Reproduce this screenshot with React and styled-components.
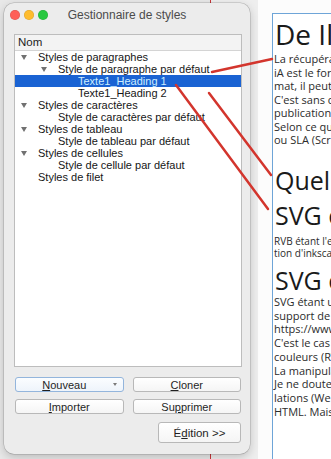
import React from 'react'
import styled, { createGlobalStyle } from 'styled-components'

const GlobalStyle = createGlobalStyle`
  html, body {
    margin: 0;
    padding: 0;
  }
  body {
    width: 331px;
    height: 459px;
    overflow: hidden;
    font-family: "Liberation Sans", Arial, sans-serif;
  }
`

const Stage = styled.div`
  position: relative;
  display: flex;
  width: 331px;
  height: 459px;
  overflow: hidden;
  background: #e8e8e8;
`

const Canvas = styled.div`
  width: 210px;
  flex: none;
  border-right: 1px solid #c9373a;
`

const Gutter = styled.div`
  width: 47px;
  flex: none;
  background: #eeeeee;
`

const Page = styled.div`
  flex: 1;
  min-width: 0;
  background: #fcfcfc;
  padding: 13px 0 0 14px;
`

const Frame = styled.div`
  height: 100%;
  border-top: 1px solid #6ea5d8;
  border-left: 1px solid #6ea5d8;
  background: #fff;
  padding-left: 1px;
  overflow: hidden;
  font-family: "Open Sans", "Noto Sans", sans-serif;
  color: #2b2b2b;
`

const Heading = styled.div`
  font-size: ${p => p.$size}px;
  line-height: ${p => p.$size}px;
  margin-top: ${p => p.$gap}px;
  padding-left: 1px;
  white-space: nowrap;
  color: #1a1a1a;
`

const Para = styled.div`
  font-size: ${p => p.$size || 11}px;
  line-height: ${p => p.$lh || 13.5}px;
  margin-top: ${p => p.$gap}px;
`

const Line = styled.div`
  white-space: nowrap;
`

/* dialog window */

const Dialog = styled.div`
  position: absolute;
  left: 4px;
  top: 3px;
  width: 246px;
  height: 451px;
  box-sizing: border-box;
  border-radius: 10px;
  background: #ececec;
  box-shadow: 0 0 0 0.5px rgba(0, 0, 0, 0.22), 0 3px 10px rgba(0, 0, 0, 0.2);
  display: flex;
  flex-direction: column;
`

const TitleBar = styled.div`
  height: 24px;
  display: grid;
  grid-template-columns: 1fr auto 1fr;
  align-items: center;
  padding: 0 6px;
`

const Lights = styled.div`
  display: flex;
  gap: 4px;
`

const Light = styled.span`
  width: 10px;
  height: 10px;
  border-radius: 50%;
  background: ${p => p.$color};
  box-shadow: inset 0 0 0 0.5px rgba(0, 0, 0, 0.15);
`

const Title = styled.div`
  font-size: 12px;
  color: #4b4b4b;
  white-space: nowrap;
`

const Body = styled.div`
  flex: 1;
  display: flex;
  flex-direction: column;
  padding: 7px 8px 11px 10px;
`

const Tree = styled.div`
  height: 333px;
  box-sizing: border-box;
  border: 1px solid #bdbdbd;
  background: #fff;
`

const TreeHeader = styled.div`
  height: 16px;
  box-sizing: border-box;
  border-bottom: 1px solid #d4d4d4;
  background: #f3f3f3;
  padding-left: 3px;
  font-size: 11.5px;
  line-height: 15px;
  color: #1d1d1d;
`

const Row = styled.div`
  height: 12px;
  display: flex;
  align-items: center;
  padding-left: ${p => 6 + p.$level * 20}px;
  background: ${p => (p.$selected ? '#1a63d3' : 'transparent')};
  color: ${p => (p.$selected ? '#cdeeff' : '#161616')};
  font-size: 11px;
  line-height: 12px;
  white-space: nowrap;
`

const Twisty = styled.span`
  width: 17px;
  flex: none;
  display: flex;
  align-items: center;
`

const Triangle = styled.span`
  width: 0;
  height: 0;
  border-left: 3.5px solid transparent;
  border-right: 3.5px solid transparent;
  border-top: 5px solid #717171;
`

const ButtonGrid = styled.div`
  display: grid;
  grid-template-columns: 1fr 1fr;
  gap: 7px 9px;
  margin-top: 10px;
  padding: 0 1px;
`

const Button = styled.div`
  height: ${p => p.$h || 15}px;
  box-sizing: border-box;
  border: 1px solid ${p => (p.$focus ? '#93b5dc' : '#b8b8b8')};
  border-radius: 3px;
  background: ${p =>
    p.$focus ? 'linear-gradient(#fbfdff, #eef4fb)' : 'linear-gradient(#ffffff, #f5f5f5)'};
  display: flex;
  align-items: center;
  justify-content: center;
  font-size: 11px;
  color: #1f1f1f;
  white-space: nowrap;
`

const Label = styled.span`
  flex: 1;
  text-align: center;
`

const Key = styled.span`
  text-decoration: underline;
  text-underline-offset: 1px;
`

const DropArrow = styled.span`
  width: 0;
  height: 0;
  margin-right: 6px;
  border-left: 2.5px solid transparent;
  border-right: 2.5px solid transparent;
  border-top: 3px solid #7a7a7a;
`

const EditRow = styled.div`
  display: flex;
  justify-content: flex-end;
  margin-top: 8px;
  padding-right: 1px;
`

const EditButton = styled(Button)`
  width: 83px;
  font-size: 11.5px;
`

const Annotations = styled.svg`
  position: absolute;
  left: 0;
  top: 0;
  pointer-events: none;
`

const rows = [
  { level: 0, open: true, text: 'Styles de paragraphes' },
  { level: 1, open: true, text: 'Style de paragraphe par défaut' },
  { level: 2, text: 'Texte1_Heading 1', selected: true },
  { level: 2, text: 'Texte1_Heading 2' },
  { level: 0, open: true, text: 'Styles de caractères' },
  { level: 1, text: 'Style de caractères par défaut' },
  { level: 0, open: true, text: 'Styles de tableau' },
  { level: 1, text: 'Style de tableau par défaut' },
  { level: 0, open: true, text: 'Styles de cellules' },
  { level: 1, text: 'Style de cellule par défaut' },
  { level: 0, text: 'Styles de filet' },
]

const intro = [
  'La récupération des fichiers',
  'iA est le format natif de',
  'mat, il peut être importé',
  "C'est sans compter sur la",
  'publication assistée par',
  'Selon ce que vous voulez',
  'ou SLA (Scribus) directement',
]

const rvb = [
  "RVB étant l'espace colorimétrique",
  "tion d'inkscape par défaut",
]

const svgText = [
  'SVG étant un format ouvert',
  'support de nombreux logiciels',
  'https://www.w3.org/Graphics/SVG',
  "C'est le cas de Scribus",
  'couleurs (RVB et CMJN)',
  'La manipulation des fichiers',
  'Je ne doute pas que les',
  'lations (Web, impression)',
  'HTML. Mais ce sera pour',
]

export default function App() {
  return (
    <>
      <GlobalStyle />
      <Stage>
        <Canvas />
        <Gutter />
        <Page>
          <Frame>
            <Heading $size={28} $gap={6}>De Illustrator à Scribus</Heading>
            <Para $gap={4}>
              {intro.map(l => <Line key={l}>{l}</Line>)}
            </Para>
            <Heading $size={25} $gap={21.5}>Quelques remarques</Heading>
            <Heading $size={25} $gap={9.8}>SVG et couleurs</Heading>
            <Para $size={10} $lh={12} $gap={7}>
              {rvb.map(l => <Line key={l}>{l}</Line>)}
            </Para>
            <Heading $size={25} $gap={9}>SVG et Scribus</Heading>
            <Para $lh={13.75} $gap={2}>
              {svgText.map(l => <Line key={l}>{l}</Line>)}
            </Para>
          </Frame>
        </Page>

        <Dialog>
          <TitleBar>
            <Lights>
              <Light $color="#fe5f57" />
              <Light $color="#febc2e" />
              <Light $color="#28c840" />
            </Lights>
            <Title>Gestionnaire de styles</Title>
            <span />
          </TitleBar>
          <Body>
            <Tree>
              <TreeHeader>Nom</TreeHeader>
              {rows.map(r => (
                <Row key={r.text} $level={r.level} $selected={r.selected}>
                  <Twisty>{r.open && <Triangle />}</Twisty>
                  {r.text}
                </Row>
              ))}
            </Tree>
            <ButtonGrid>
              <Button $focus>
                <Label><Key>N</Key>ouveau</Label>
                <DropArrow />
              </Button>
              <Button><Key>C</Key>loner</Button>
              <Button><Key>I</Key>mporter</Button>
              <Button>Su<Key>p</Key>primer</Button>
            </ButtonGrid>
            <EditRow>
              <EditButton $h={21}>É<Key>d</Key>ition &gt;&gt;</EditButton>
            </EditRow>
          </Body>
        </Dialog>

        <Annotations width="331" height="459">
          <g stroke="#d3352d" strokeWidth="2.5" strokeLinecap="round">
            <line x1="212" y1="72" x2="272" y2="59" />
            <line x1="176" y1="85" x2="268" y2="209" />
            <line x1="209" y1="93" x2="271" y2="175" />
          </g>
        </Annotations>
      </Stage>
    </>
  )
}
